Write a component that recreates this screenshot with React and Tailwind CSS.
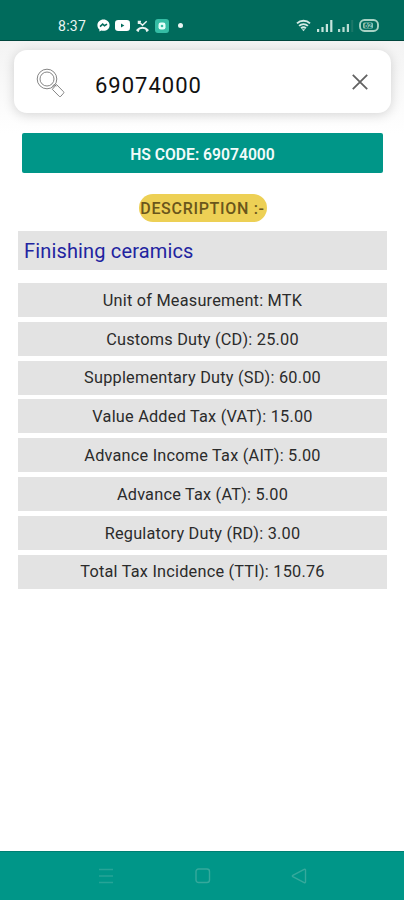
import { useState } from "react";

const rates = [
  { label: "Unit of Measurement", value: "MTK" },
  { label: "Customs Duty (CD)", value: "25.00" },
  { label: "Supplementary Duty (SD)", value: "60.00" },
  { label: "Value Added Tax (VAT)", value: "15.00" },
  { label: "Advance Income Tax (AIT)", value: "5.00" },
  { label: "Advance Tax (AT)", value: "5.00" },
  { label: "Regulatory Duty (RD)", value: "3.00" },
  { label: "Total Tax Incidence (TTI)", value: "150.76" },
];

const StatusBar = () => (
  <header className="flex h-[41px] shrink-0 items-center border-b border-[#00463d] bg-[#006b5c] pt-[11px] pr-[25px] pl-[58px] text-[#e9f4f2]">
    <span className="w-[38px] text-[14px] leading-none tracking-[0.3px]">8:37</span>
    {/* Messenger */}
    <svg className="ml-px" width="13" height="13" viewBox="0 0 13 13">
      <path d="M6.5.5C3 .5.4 3 .4 6.2c0 1.8.8 3.3 2 4.3v2l1.9-1c.7.2 1.4.3 2.2.3 3.5 0 6.100-2.4 6.100-5.600S10 .5 6.500.5Z" fill="#fff" />
      <path d="m3 7.600 2.700-2.500 1.800 1.600 2.500-1.600" fill="none" stroke="#006b5c" strokeWidth="1.500" />
    </svg>
    {/* YouTube */}
    <svg className="ml-[5px]" width="15" height="11" viewBox="0 0 15 11">
      <rect width="15" height="11" rx="3.200" fill="#fff" />
      <path d="M6 3.500v4l3.300-2Z" fill="#006b5c" />
    </svg>
    {/* Missed call */}
    <svg className="ml-[6px]" width="13" height="12" viewBox="0 0 13 12" fill="none" stroke="#e9f4f2">
      <path d="M2.500 4V1.500H5M2.700 1.700l3.800 3.500L10.700 1.300" strokeWidth="1.500" />
      <path d="M1.300 10.200C4 6.900 9 6.900 11.700 10.200" strokeWidth="2.200" />
      <path d="m.7 9.800 2.200 1.500M12.300 9.800l-2.200 1.500" strokeWidth="1.900" />
    </svg>
    <svg className="ml-[6px]" width="14" height="14" viewBox="0 0 14 14">
      <rect width="14" height="14" rx="3" fill="#35bda5" />
      <rect x="3.500" y="3.500" width="7" height="7" rx="2.300" fill="#e4fffa" />
      <circle cx="7" cy="7" r="1.300" fill="#35bda5" />
    </svg>
    <span className="ml-[9px] size-[5px] rounded-full bg-[#e9f4f2]" />

    <div className="ml-auto flex items-center">
      <svg width="15" height="13" viewBox="0 0 15 13" fill="none" stroke="#d5ebe5" strokeWidth="1.900">
        <path d="M1 4.400C4.600.9 10.400.9 14 4.400M3.100 6.900c2.500-2.400 6.300-2.400 8.800 0M5.100 9.300c1.400-1.300 3.400-1.300 4.800 0" />
        <path d="M5.800 10.200h3.400l-1.700 2Z" fill="#d5ebe5" stroke="none" />
      </svg>
      <svg className="ml-[6px]" width="16" height="12" viewBox="0 0 16 12" fill="#c6e4dc">
        <path d="M0 9h2.200v3H0zM4.400 7h2.200v5H4.400zM8.800 4H11v8H8.800zM13.200 0h2.200v12h-2.200z" />
      </svg>
      <svg className="ml-[5px]" width="16" height="12" viewBox="0 0 16 12" fill="#b9dcd3">
        <path d="M0 9h2.200v3H0zM4.400 7h2.200v5H4.400zM8.800 4H11v8H8.800z" />
        <path d="M13.200 0h2v12h-2z" fill="#1b7768" />
      </svg>
      <svg className="ml-[5px]" width="20" height="13" viewBox="0 0 20 13">
        <rect x="1" y="1" width="18" height="11" rx="4.500" fill="none" stroke="#a8d3c5" strokeWidth="1.900" />
        <rect x="4" y="3.500" width="10" height="6" rx="1.500" fill="#8cc2b3" />
        <text x="9" y="8.900" fontSize="6.500" textAnchor="middle" fill="#006b5c" fontFamily="Roboto, sans-serif" fontWeight="700">62</text>
      </svg>
    </div>
  </header>
);

const SearchBar = ({ value, onChange }) => (
  <div className="bg-gradient-to-b from-[#f3f3f3] to-white pt-[9px] pr-[13px] pb-5 pl-[14px]">
    <div className="flex h-[63px] items-center rounded-[13px] bg-white pr-[23px] pl-[22px] shadow-[0_2px_12px_rgba(0,0,0,0.16)]">
      <svg className="mt-0.5 shrink-0" width="30" height="30" viewBox="0 0 30 30" fill="none" stroke="#777" strokeWidth="0.900">
        <circle cx="11" cy="11" r="9.800" />
        <circle cx="11" cy="11" r="7" />
        <path d="m16.300 18.600 1.900-2.200 2.200 1.800M16.300 21.300l4.200-4.800 7 7.200c.5.500.5 1 .1 1.400l-2.800 3.200c-.5.500-1.100.5-1.500.1Z" />
      </svg>
      <input
        value={value}
        onChange={(e) => onChange(e.target.value)}
        className="mt-[7px] ml-[29px] min-w-0 flex-1 bg-transparent text-[22px] leading-none tracking-[1px] text-[#111] outline-none"
      />
      <button onClick={() => onChange("")} aria-label="Clear" className="cursor-pointer">
        <svg width="16" height="16" viewBox="0 0 16 16" stroke="#626262" strokeWidth="1.800">
          <path d="m.8.8 14.400 14.400M15.200.8.8 15.200" />
        </svg>
      </button>
    </div>
  </div>
);

const NavBar = () => (
  <nav className="flex h-[49px] shrink-0 items-center justify-between border-t border-[#007f73] bg-[#009688] pr-[97px] pl-[98px]">
    <svg width="16" height="16" viewBox="0 0 16 16" stroke="#26a497" strokeWidth="1.600">
      <path d="M1 1.500h14M1 8h14M1 14.500h14" />
    </svg>
    <svg width="16" height="16" viewBox="0 0 16 16" fill="none" stroke="#35a99c" strokeWidth="1.400">
      <rect x="1" y="1" width="13.500" height="13.500" rx="2.500" />
    </svg>
    <svg width="16" height="16" viewBox="0 0 16 16" fill="none" stroke="#35a99c" strokeWidth="1.400">
      <path d="M13.200 1.400 1.800 7.300c-.6.300-.6.900 0 1.300l11.400 6c.8.400 1.300.1 1.300-.7V2.100c0-.8-.5-1.100-1.300-.7Z" />
    </svg>
  </nav>
);

const App = () => {
  const [code, setCode] = useState("69074000");

  return (
    <div className="flex h-[900px] w-full max-w-[404px] flex-col overflow-hidden bg-white font-[Roboto,sans-serif]">
      <StatusBar />
      <SearchBar value={code} onChange={setCode} />

      <main className="flex flex-1 flex-col pr-[17px] pl-[18px]">
        <div className="mx-1 flex h-10 items-center justify-center rounded-[2px] bg-[#009688] pt-[3px] text-[15.700px] font-semibold text-[#f2fbfa]">
          HS CODE: 69074000
        </div>

        <h2 className="mt-[21px] flex h-7 w-[128px] items-center justify-center self-center rounded-full bg-[#edd055] pt-px text-[16px] font-medium tracking-[0.700px] whitespace-nowrap text-[#6a561b]">
          DESCRIPTION :-
        </h2>

        <p className="mt-[9px] flex h-[39px] items-center bg-[#e3e3e3] px-1.5 pt-px text-[20px] tracking-[0.150px] text-[#2224a0]">
          Finishing ceramics
        </p>

        <ul className="mt-[13px] flex flex-col gap-[4.800px]">
          {rates.map((rate) => (
            <li
              key={rate.label}
              className="flex h-[34px] items-center justify-center bg-[#e3e3e3] pt-0.5 text-[16.300px] tracking-[0.220px] text-[#2b2b2b]"
            >
              {rate.label}: {rate.value}
            </li>
          ))}
        </ul>
      </main>

      <NavBar />
    </div>
  );
};

export default App;
